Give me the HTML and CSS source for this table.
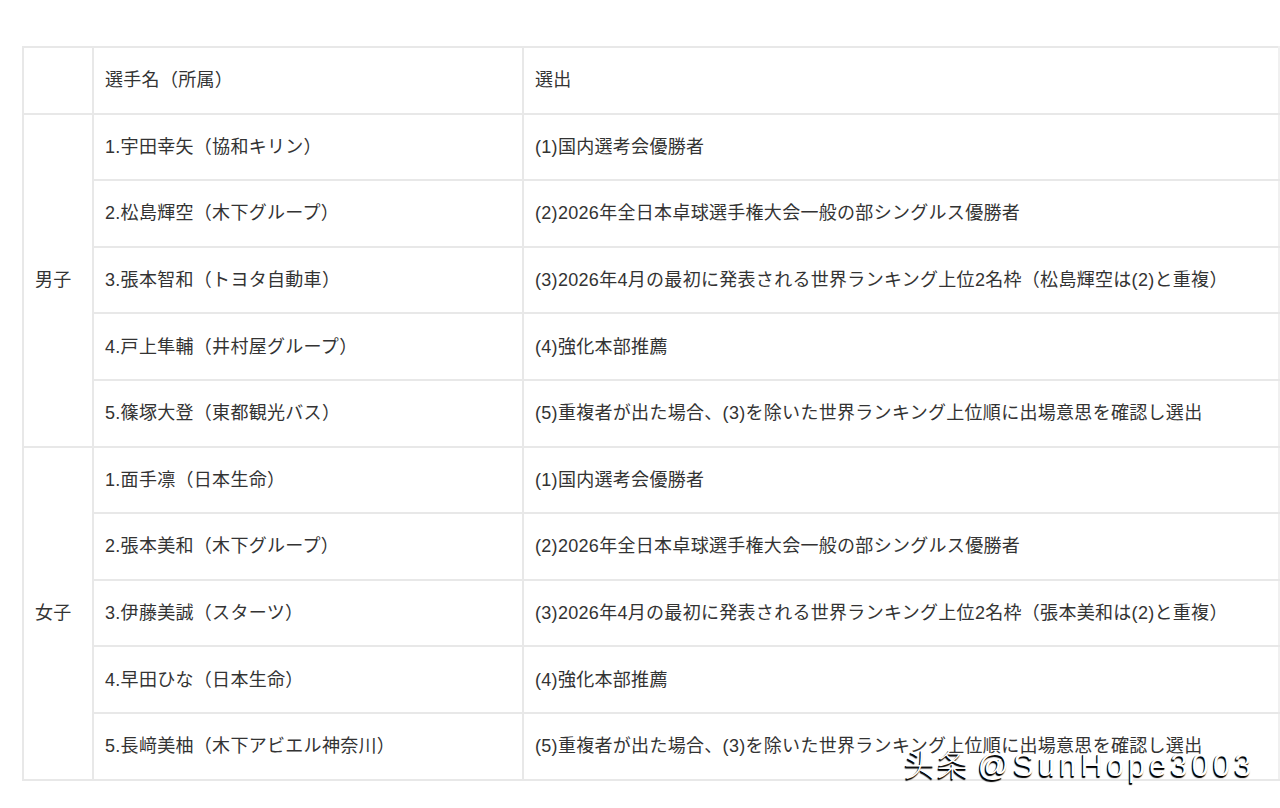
FILE: index.html
```html
<!DOCTYPE html>
<html lang="ja">
<head>
<meta charset="utf-8">
<link rel="stylesheet" href="styles.css">
</head>
<body>
<div class="page">
<table class="sel">
  <colgroup>
    <col class="c1"><col class="c2"><col class="c3">
  </colgroup>
  <tr><td></td><td>選手名（所属）</td><td>選出</td></tr>
  <tr><td rowspan="5">男子</td><td>1.宇田幸矢（協和キリン）</td><td>(1)国内選考会優勝者</td></tr>
  <tr><td>2.松島輝空（木下グループ）</td><td>(2)2026年全日本卓球選手権大会一般の部シングルス優勝者</td></tr>
  <tr><td>3.張本智和（トヨタ自動車）</td><td>(3)2026年4月の最初に発表される世界ランキング上位2名枠（松島輝空は(2)と重複）</td></tr>
  <tr><td>4.戸上隼輔（井村屋グループ）</td><td>(4)強化本部推薦</td></tr>
  <tr><td>5.篠塚大登（東都観光バス）</td><td>(5)重複者が出た場合、(3)を除いた世界ランキング上位順に出場意思を確認し選出</td></tr>
  <tr><td rowspan="5">女子</td><td>1.面手凛（日本生命）</td><td>(1)国内選考会優勝者</td></tr>
  <tr><td>2.張本美和（木下グループ）</td><td>(2)2026年全日本卓球選手権大会一般の部シングルス優勝者</td></tr>
  <tr><td>3.伊藤美誠（スターツ）</td><td>(3)2026年4月の最初に発表される世界ランキング上位2名枠（張本美和は(2)と重複）</td></tr>
  <tr><td>4.早田ひな（日本生命）</td><td>(4)強化本部推薦</td></tr>
  <tr><td>5.長﨑美柚（木下アビエル神奈川）</td><td>(5)重複者が出た場合、(3)を除いた世界ランキング上位順に出場意思を確認し選出</td></tr>
</table>
<div class="wm"><span class="wm-cn">头条</span> <span class="wm-en">@SunHope3003</span></div>
</div>
</body>
</html>
```
FILE: styles.css
```css
html, body {
  margin: 0;
  padding: 0;
  background: #fff;
}
.page {
  position: relative;
  width: 1280px;
  height: 808px;
  overflow: hidden;
  padding-top: 46px;
  padding-left: 22px;
  box-sizing: border-box;
}
.sel {
  border-collapse: collapse;
  table-layout: fixed;
  width: 1256px;
  font-family: "Liberation Sans", "Noto Sans CJK JP", sans-serif;
  font-size: 18px;
  letter-spacing: 0.3px;
  color: #333;
}
.c1 { width: 70px; }
.c2 { width: 430px; }
.c3 { width: 756px; }
.sel td {
  border: 2px solid #e8e8e8;
  height: 66.6px;
  padding: 0 0 0 11px;
  vertical-align: middle;
  white-space: nowrap;
  box-sizing: border-box;
  line-height: 1;
}
.sel tr td:last-child { border-right-color: #f0f0f0; }
.wm {
  position: absolute;
  left: 904px;
  top: 744px;
  font-size: 31px;
  color: #fff;
  text-shadow: -1px 2px 1px #000, -1px 1px 0 #000;
  white-space: nowrap;
  line-height: 1.2;
}
.wm-cn {
  font-family: "Noto Sans CJK SC", sans-serif;
  font-weight: 300;
  letter-spacing: 2px;
}
.wm-en {
  font-family: "Liberation Sans", sans-serif;
  letter-spacing: 4px;
}
```
